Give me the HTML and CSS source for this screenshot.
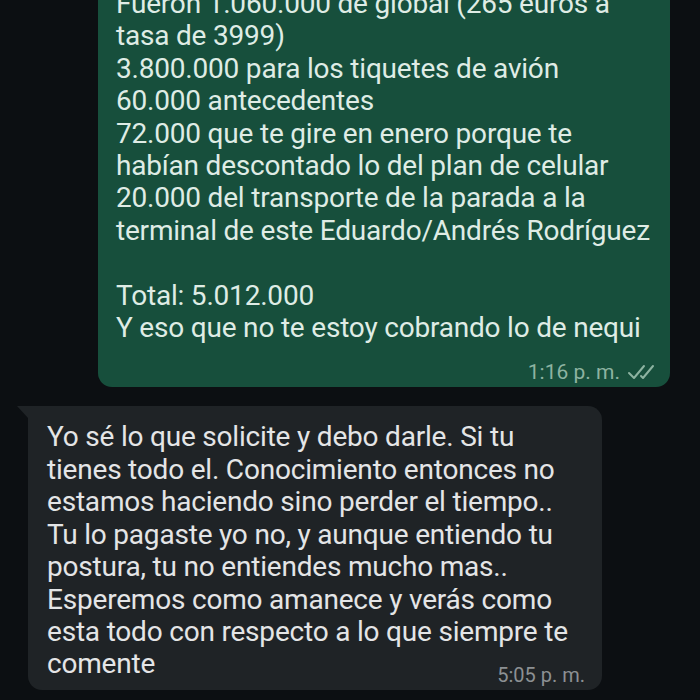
FILE: index.html
```html
<!DOCTYPE html>
<html lang="es">
<head>
<meta charset="utf-8">
<link rel="stylesheet" href="styles.css">
</head>
<body>
<div class="chat">
  <div class="bubble out">
    <div class="text">Fueron 1.060.000 de global (265 euros a<br>tasa de 3999)<br>3.800.000 para los tiquetes de avión<br>60.000 antecedentes<br>72.000 que te gire en enero porque te<br>habían descontado lo del plan de celular<br>20.000 del transporte de la parada a la<br>terminal de este Eduardo/Andrés Rodríguez<br><br>Total: 5.012.000<br>Y eso que no te estoy cobrando lo de nequi</div>
    <div class="meta out-meta"><span>1:16 p. m.</span>
      <svg class="ticks" width="28" height="16" viewBox="0 0 28 16"><path d="M2 9 L7 14 L17 2" fill="none" stroke="currentColor" stroke-width="2" stroke-linecap="round" stroke-linejoin="round"/><path d="M14 12 L16 14 L26 2" fill="none" stroke="currentColor" stroke-width="2" stroke-linecap="round" stroke-linejoin="round"/></svg>
    </div>
  </div>
  <div class="bubble in">
    <div class="text">Yo sé lo que solicite y debo darle. Si tu<br>tienes todo el. Conocimiento entonces no<br>estamos haciendo sino perder el tiempo..<br>Tu lo pagaste yo no, y aunque entiendo tu<br>postura, tu no entiendes mucho mas..<br>Esperemos como amanece y verás como<br>esta todo con respecto a lo que siempre te<br>comente<span class="meta in-meta">5:05 p. m.</span></div>
  </div>
</div>
</body>
</html>
```
FILE: styles.css
```css
html, body {
  margin: 0;
  padding: 0;
  background: #0c0f12;
  height: 700px;
  overflow: hidden;
}
.chat {
  display: flex;
  flex-direction: column;
  font-family: Roboto, "Noto Sans", sans-serif;
}
.bubble {
  border-radius: 14px;
  font-size: 28px;
  line-height: 32.4px;
  position: relative;
}
.bubble.out {
  background: #174f3c;
  color: #dfece5;
  margin: -30px 0 0 98px;
  width: 572px;
  padding: 18px 15px 4px 18px;
  box-sizing: border-box;
}
.bubble.in {
  background: #1f2326;
  color: #e4e5e6;
  margin: 19px 0 0 28px;
  width: 574px;
  padding: 15px 17px 4px 19px;
  box-sizing: border-box;
  border-top-left-radius: 0;
}
.bubble.in::before {
  content: "";
  position: absolute;
  left: -11px;
  top: 0;
  border-top: 12px solid #1f2326;
  border-left: 11px solid transparent;
}
.text {
  letter-spacing: -0.2px;
}
.meta {
  line-height: 22px;
  letter-spacing: 0;
}
.out-meta {
  display: flex;
  justify-content: flex-end;
  align-items: center;
  gap: 7px;
  font-size: 21px;
  color: #8db3a1;
  margin-top: 17px;
}
.ticks {
  color: #8db3a1;
}
.in-meta {
  float: right;
  font-size: 20px;
  color: #8c9093;
  margin-top: 16px;
}
```
